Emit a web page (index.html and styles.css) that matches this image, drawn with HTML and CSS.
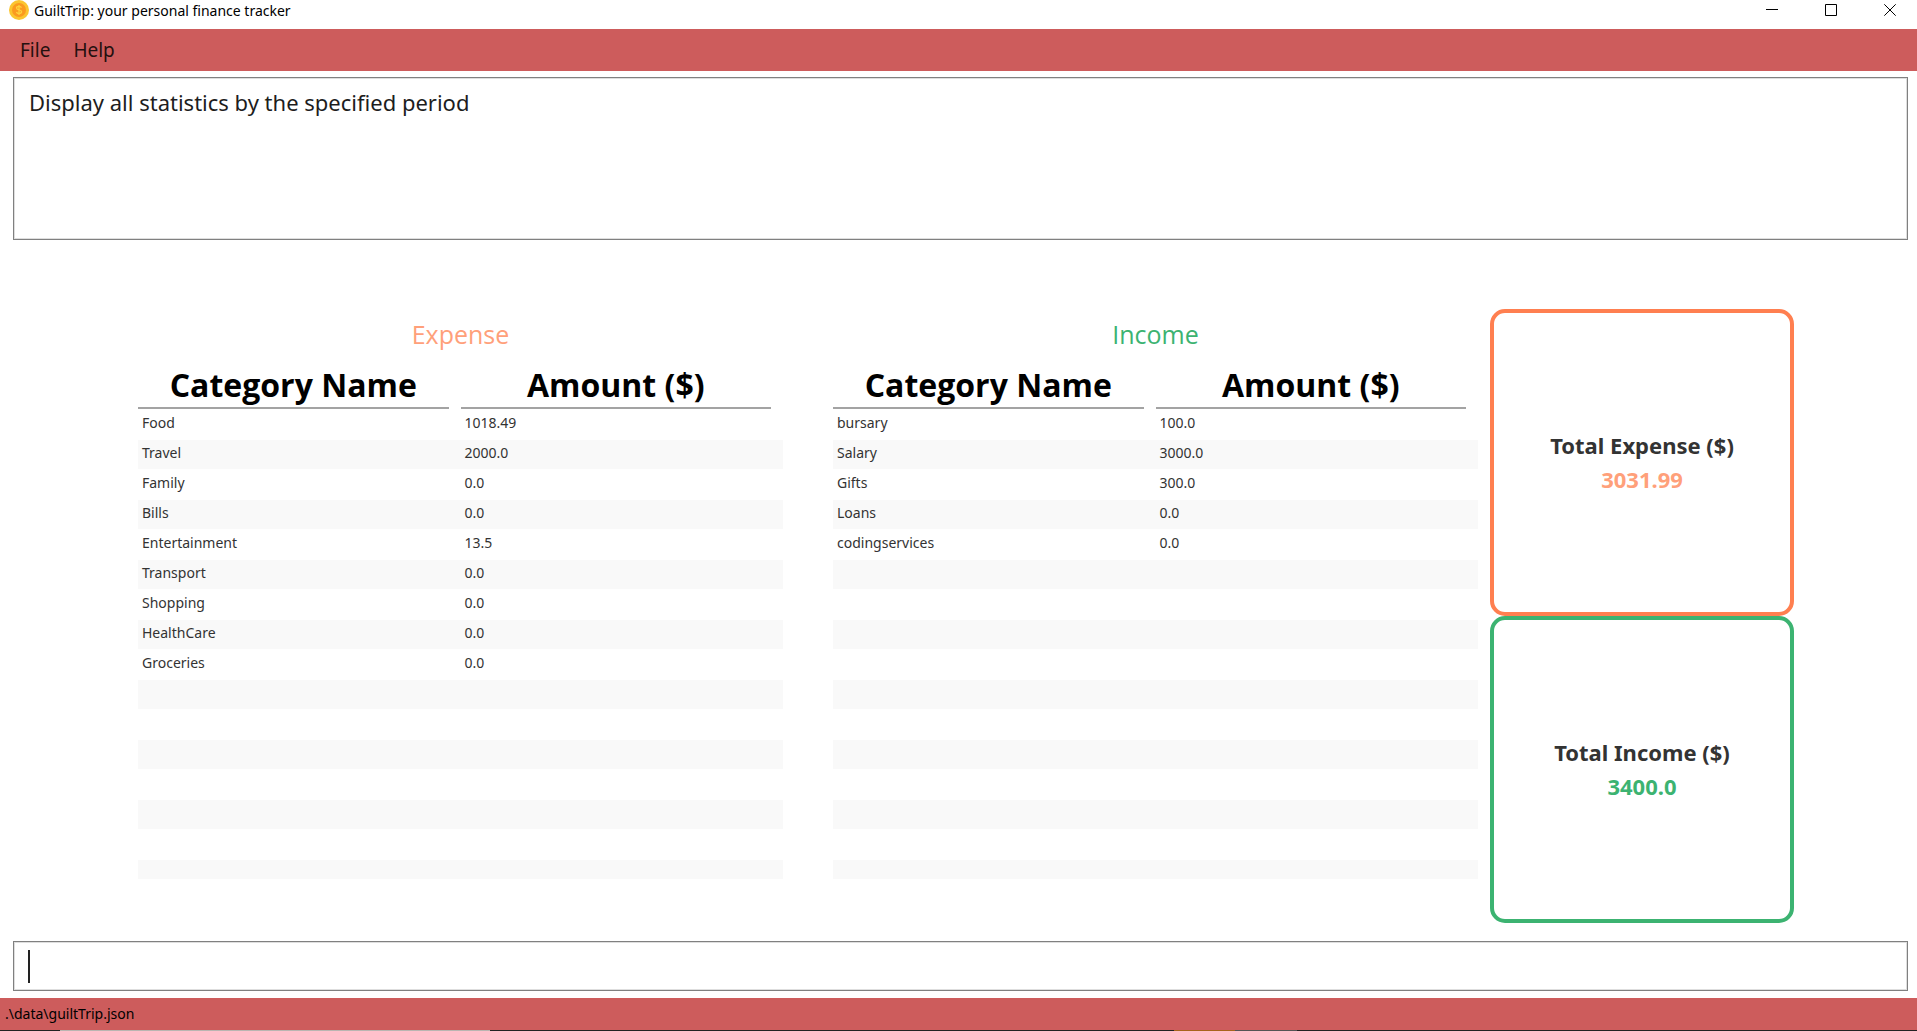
FILE: index.html
```html
<!DOCTYPE html>
<html lang="en">
<head>
<meta charset="utf-8">
<title>GuiltTrip: your personal finance tracker</title>
<link rel="stylesheet" href="styles.css">
</head>
<body>
<header class="titlebar">
  <svg class="coin" viewBox="0 0 20 20" aria-hidden="true">
    <circle cx="10" cy="10" r="10" fill="#fbc52f"/>
    <circle cx="10" cy="10" r="7" fill="#fb9a1f"/>
    <path d="M12.5 7.6C12 6.7 11 6.4 10 6.4c-1.400 0-2.500.6-2.500 1.700 0 2.500 5.100 1.200 5.100 3.700 0 1.200-1.200 1.800-2.600 1.800-1.200 0-2.200-.5-2.600-1.500M10 5v10" fill="none" stroke="#fdd23c" stroke-width="1.300"/>
  </svg>
  <span class="app-name">GuiltTrip: your personal finance tracker</span>
  <div class="window-buttons">
    <button type="button" aria-label="Minimize"><svg viewBox="0 0 12 12"><path d="M0 5.500h12"/></svg></button>
    <button type="button" aria-label="Maximize"><svg viewBox="0 0 12 12"><path d="M.5.5h11v11H.5z"/></svg></button>
    <button type="button" aria-label="Close"><svg viewBox="0 0 12 12"><path d="M.3.3l11.400 11.400M11.700.3L.3 11.700"/></svg></button>
  </div>
</header>
<nav class="menubar">
  <button type="button">File</button>
  <button type="button">Help</button>
</nav>
<textarea class="output" readonly aria-label="Result">Display all statistics by the specified period</textarea>
<main class="stats">
  <div class="panels">
    <section class="panel">
      <h2 class="panel-title expense">Expense</h2>
      <div class="table-view">
        <table>
          <thead><tr><th><span>Category Name</span></th><th><span>Amount ($)</span></th></tr></thead>
          <tbody>
            <tr><td>Food</td><td>1018.49</td></tr>
            <tr><td>Travel</td><td>2000.0</td></tr>
            <tr><td>Family</td><td>0.0</td></tr>
            <tr><td>Bills</td><td>0.0</td></tr>
            <tr><td>Entertainment</td><td>13.5</td></tr>
            <tr><td>Transport</td><td>0.0</td></tr>
            <tr><td>Shopping</td><td>0.0</td></tr>
            <tr><td>HealthCare</td><td>0.0</td></tr>
            <tr><td>Groceries</td><td>0.0</td></tr>
            <tr><td></td><td></td></tr>
            <tr><td></td><td></td></tr>
            <tr><td></td><td></td></tr>
            <tr><td></td><td></td></tr>
            <tr><td></td><td></td></tr>
            <tr><td></td><td></td></tr>
            <tr><td></td><td></td></tr>
          </tbody>
        </table>
      </div>
    </section>
    <section class="panel">
      <h2 class="panel-title income">Income</h2>
      <div class="table-view">
        <table>
          <thead><tr><th><span>Category Name</span></th><th><span>Amount ($)</span></th></tr></thead>
          <tbody>
            <tr><td>bursary</td><td>100.0</td></tr>
            <tr><td>Salary</td><td>3000.0</td></tr>
            <tr><td>Gifts</td><td>300.0</td></tr>
            <tr><td>Loans</td><td>0.0</td></tr>
            <tr><td>codingservices</td><td>0.0</td></tr>
            <tr><td></td><td></td></tr>
            <tr><td></td><td></td></tr>
            <tr><td></td><td></td></tr>
            <tr><td></td><td></td></tr>
            <tr><td></td><td></td></tr>
            <tr><td></td><td></td></tr>
            <tr><td></td><td></td></tr>
            <tr><td></td><td></td></tr>
            <tr><td></td><td></td></tr>
            <tr><td></td><td></td></tr>
            <tr><td></td><td></td></tr>
          </tbody>
        </table>
      </div>
    </section>
  </div>
  <aside class="totals">
    <div class="total-card expense-card"><p>Total Expense ($)</p><p class="expense">3031.99</p></div>
    <div class="total-card income-card"><p>Total Income ($)</p><p class="income">3400.0</p></div>
  </aside>
</main>
<div class="command">
  <input type="text" aria-label="Command">
  <span class="caret"></span>
</div>
<footer class="statusbar">.\data\guiltTrip.json</footer>
<div class="taskbar-edge"></div>
</body>
</html>
```
FILE: styles.css
```css
* {
  box-sizing: border-box;
}

body {
  margin: 0;
  display: flex;
  flex-direction: column;
  height: 100vh;
  min-height: 800px;
  background: #fff;
  color: #333;
  font: 14px/20px "Noto Sans", "Open Sans", sans-serif;
}

button {
  border: 0;
  padding: 0;
  background: none;
  color: inherit;
  font: inherit;
}

.titlebar {
  display: flex;
  gap: 5px;
  height: 29px;
  padding-left: 9px;
  color: #000;
}

.coin {
  width: 20px;
  height: 20px;
}

.app-name {
  flex: 1;
  line-height: 22px;
}

.window-buttons {
  display: flex;
  gap: 5px;
}

.window-buttons button {
  display: flex;
  align-items: center;
  justify-content: center;
  width: 54px;
  height: 20px;
}

.window-buttons svg {
  width: 12px;
  height: 12px;
  fill: none;
  stroke: #000;
}

.menubar {
  display: flex;
  align-items: center;
  gap: 23px;
  height: 42px;
  padding-left: 20px;
  background: #cd5c5c;
  color: #24100f;
  font-size: 19px;
}

.output {
  display: block;
  height: 163px;
  margin: 6px 9px 0 13px;
  padding: 9px 15px;
  border: 1px solid #808080;
  box-shadow: inset 0 0 0 1px #dedede;
  outline: 0;
  resize: none;
  background: #fff;
  color: #1d1d1d;
  font: 22px/30px "Noto Sans", "Open Sans", sans-serif;
}

.stats {
  flex: 1;
  min-height: 0;
  display: grid;
  grid-template-columns: 1fr 304px;
  gap: 12px;
  padding: 69px 123px 18px 138px;
}

.panels {
  display: grid;
  grid-template-columns: 1fr 1fr;
  gap: 50px;
  min-height: 0;
  padding-bottom: 44px;
}

.panel {
  display: flex;
  flex-direction: column;
  min-height: 0;
}

.panel-title {
  flex: none;
  height: 54px;
  margin: 0;
  text-align: center;
  font: 400 25px/50px "Open Sans", sans-serif;
}

.expense {
  color: #ffa07a;
}

.income {
  color: #3cb371;
}

.table-view {
  flex: 1;
  min-height: 0;
  overflow: hidden;
}

table {
  width: 100%;
  table-layout: fixed;
  border-spacing: 0;
}

th {
  height: 47px;
  padding: 0 12px 1px 0;
  color: #000;
  font: 700 32px/44px "Open Sans", sans-serif;
}

th span {
  display: block;
  border-bottom: 2px solid #a3a3a3;
}

td {
  height: 30px;
  padding: 0 4px 3px;
  border-bottom: 1px solid transparent;
  background-clip: padding-box;
}

tbody tr:nth-child(even) td {
  background-color: #f9f9f9;
}

.totals {
  display: flex;
  flex-direction: column;
}

.total-card {
  flex: 1;
  display: flex;
  flex-direction: column;
  justify-content: center;
  padding-bottom: 2px;
  border: 4px solid;
  border-radius: 15px;
  text-align: center;
  font: 700 22px/34px "Noto Sans", "Open Sans", sans-serif;
}

.total-card p {
  margin: 0;
}

.expense-card {
  border-color: #ff7f50;
}

.income-card {
  border-color: #3cb371;
}

.command {
  position: relative;
  margin: 0 9px 7px 13px;
}

.command input {
  display: block;
  width: 100%;
  height: 50px;
  padding: 0 14px;
  border: 1px solid #808080;
  box-shadow: inset 0 0 0 1px #dedede;
  outline: 0;
  caret-color: transparent;
  font: 22px "Noto Sans", sans-serif;
}

.caret {
  position: absolute;
  top: 9px;
  left: 15px;
  width: 2px;
  height: 33px;
  background: #222;
}

.statusbar {
  height: 32px;
  padding-left: 5px;
  background: #cd5c5c;
  color: #000;
  line-height: 31px;
}

.taskbar-edge {
  height: 1px;
  background: linear-gradient(90deg, #222 60px, #b9b5b1 60px 490px, #222 490px 1174px, #a8641c 1174px 1235px, #555 1235px 1297px, #222 1297px);
}
```
